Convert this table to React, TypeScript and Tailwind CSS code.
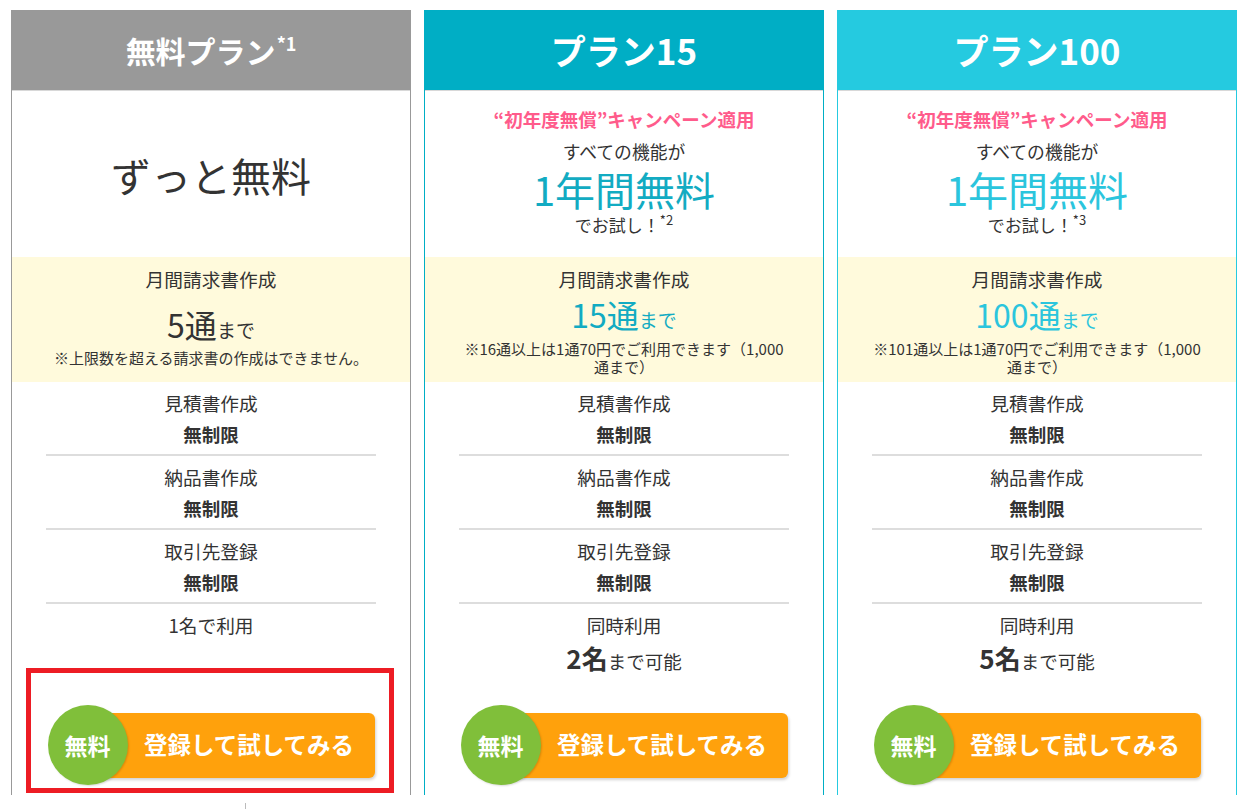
import React from "react";

type Plan = {
  title: string;
  sup?: string;
  titleSize: string;
  headerBg: string;
  border: string;
  accent: string;
  free?: boolean;
  note: string;
  count: string;
  countGap: string;
  lastLabel: string;
  lastValue?: string;
  campaignSup?: string;
};

const plans: Plan[] = [
  {
    title: "無料プラン",
    sup: "*1",
    titleSize: "text-[30px]",
    headerBg: "bg-[#999999]",
    border: "border-[#999999]",
    accent: "text-[#333333]",
    free: true,
    note: "※上限数を超える請求書の作成はできません。",
    count: "5",
    countGap: "mt-[15px]",
    lastLabel: "1名で利用",
  },
  {
    title: "プラン15",
    titleSize: "text-[35px]",
    headerBg: "bg-[#00aec5]",
    border: "border-[#00aec5]",
    accent: "text-[#12abc2]",
    note: "※16通以上は1通70円でご利用できます（1,000",
    count: "15",
    countGap: "mt-[5px]",
    lastLabel: "同時利用",
    lastValue: "2名",
    campaignSup: "*2",
  },
  {
    title: "プラン100",
    titleSize: "text-[35px]",
    headerBg: "bg-[#25cae0]",
    border: "border-[#25cae0]",
    accent: "text-[#2bc5dd]",
    note: "※101通以上は1通70円でご利用できます（1,000",
    count: "100",
    countGap: "mt-[5px]",
    lastLabel: "同時利用",
    lastValue: "5名",
    campaignSup: "*3",
  },
];

function Row({ label }: { label: string }) {
  return (
    <div className="mx-[34px] border-b-2 border-[#dddddd] pb-[3px] pt-[6px] text-center">
      <p className="text-[18.7px] leading-[30px]">{label}</p>
      <p className="text-[18.5px] font-bold leading-[33px]">無制限</p>
    </div>
  );
}

function Card({ plan }: { plan: Plan }) {
  return (
    <div className={`flex h-[785px] w-[400px] shrink-0 flex-col border-x ${plan.border}`}>
      <div className={`flex h-[80px] items-center justify-center ${plan.headerBg}`}>
        <h2 className={`${plan.titleSize} font-bold text-white`}>
          {plan.title}
          {plan.sup && <span className="relative -top-[12px] ml-[1px] text-[18px]">{plan.sup}</span>}
        </h2>
      </div>
      <div className="h-px bg-[#d8d8d8]" />

      {plan.free ? (
        <div className="flex h-[166px] items-center justify-center pt-[2px]">
          <p className="text-[40px] leading-none">ずっと無料</p>
        </div>
      ) : (
        <div className="flex h-[166px] flex-col items-center pt-[15px]">
          <p className="text-[18.5px] font-bold leading-[26px] text-[#ff5b8b]">“初年度無償”キャンペーン適用</p>
          <p className="mt-[3px] text-[17.8px] leading-[32px]">すべての機能が</p>
          <p className={`text-[40px] leading-[44px] ${plan.accent}`}>1年間無料</p>
          <p className="text-[17px] leading-[28px]">
            でお試し！<span className="relative -top-[7px] text-[13px]">{plan.campaignSup}</span>
          </p>
        </div>
      )}

      <div className="h-[125px] bg-[#fffadc] pt-[10px] text-center">
        <p className="text-[18.7px] leading-[24px]">月間請求書作成</p>
        <p className={`${plan.countGap} leading-[36px] ${plan.accent}`}>
          <span className="text-[32px]">{plan.count}通</span>
          <span className="text-[19px]">まで</span>
        </p>
        {plan.free ? (
          <p className="text-[15px] leading-[18px]">{plan.note}</p>
        ) : (
          <p className="mt-px text-[15px] leading-[18px]">
            {plan.note}
            <br />
            通まで）
          </p>
        )}
      </div>

      <Row label="見積書作成" />
      <Row label="納品書作成" />
      <Row label="取引先登録" />
      <div className="pt-[6px] text-center">
        <p className="text-[18.7px] leading-[30px]">{plan.lastLabel}</p>
        {plan.lastValue && (
          <p className="leading-[36px]">
            <span className="text-[26px] font-bold">{plan.lastValue}</span>
            <span className="text-[18.5px]">まで可能</span>
          </p>
        )}
      </div>

      <div className="relative mx-auto mt-auto mb-[10px] flex w-[327px] items-center">
        <div className="relative z-10 flex h-[80px] w-[80px] shrink-0 items-center justify-center rounded-full bg-[#80bf3a] text-[23px] font-bold text-white shadow-[1px_1px_2px_rgba(0,0,0,0.15)]">
          無料
        </div>
        <div className="-ml-[40px] flex h-[65px] flex-1 items-center justify-center rounded-[6px] bg-[#ffa10c] pl-[36px] text-[23.5px] font-bold text-white shadow-[1px_2px_3px_rgba(0,0,0,0.18)]">
          登録して試してみる
        </div>
        {plan.free && (
          <div className="pointer-events-none absolute -bottom-[8px] -left-[22px] -right-[19px] -top-[37px] z-20 border-[5px] border-[#ed1c24]" />
        )}
      </div>
    </div>
  );
}

export default function App() {
  return (
    <div className="h-[809px] w-[1245px] overflow-hidden bg-white pl-[11px] pt-[10px] font-['Noto_Sans_CJK_JP','Noto_Sans',sans-serif] text-[#333333]">
      <div className="flex gap-[13px]">
        {plans.map((p) => (
          <Card key={p.title} plan={p} />
        ))}
      </div>
      <div className="ml-[234px] mt-[8px] h-[6px] w-px bg-[#bbbbbb]" />
    </div>
  );
}
